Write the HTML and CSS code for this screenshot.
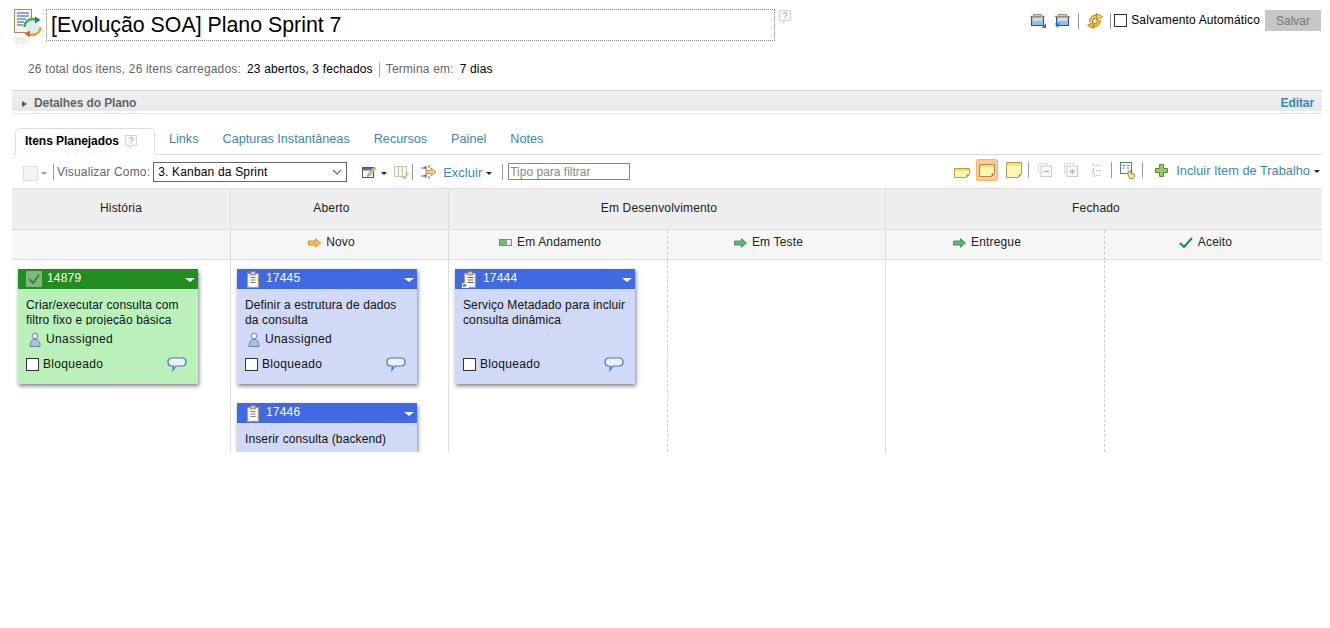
FILE: index.html
```html
<!DOCTYPE html>
<html lang="pt">
<head>
<meta charset="utf-8">
<title>Plano Sprint 7</title>
<link rel="stylesheet" href="styles.css">
</head>
<body>
<svg class="defs" width="0" height="0" aria-hidden="true">
  <defs>
    <symbol id="i-tray" viewBox="0 0 16 15">
      <path d="M3.500 3V1.500h8V3" fill="#e4dccf" stroke="#a98a66"/>
      <rect x="1.500" y="3.500" width="12" height="9" fill="#8fbdf0" stroke="#2f4fa8"/>
      <path d="M0 3.500h15" stroke="#a08a70" stroke-width="1.400"/>
      <rect x="3" y="5" width="9" height="3" fill="#c6e0fa"/>
    </symbol>
    <symbol id="i-clip" viewBox="0 0 14 17">
      <rect x="1.500" y="2.500" width="11" height="14" fill="#f2e8d6" stroke="#b89a70"/>
      <rect x="3" y="4" width="8" height="11" fill="#fff"/>
      <rect x="4.500" y=".5" width="5" height="3.500" fill="#cfc3b0" stroke="#8c7a60" stroke-width=".8"/>
      <path d="M4.500 6.500h5M4.500 9h5M4.500 11.500h5" stroke="#6a7d99"/>
    </symbol>
    <symbol id="i-clip-run" viewBox="0 0 15 17">
      <rect x="2.500" y="2.500" width="11" height="14" fill="#f2e8d6" stroke="#b89a70"/>
      <rect x="4" y="4" width="8" height="11" fill="#fff"/>
      <rect x="5.500" y=".5" width="5" height="3.500" fill="#cfc3b0" stroke="#8c7a60" stroke-width=".8"/>
      <path d="M5.500 6.500h6M5.500 9h6M5.500 11.500h6" stroke="#5a6a7c"/>
      <rect x="0" y="12" width="7" height="5" fill="#fff"/>
      <rect x="1" y="13" width="3" height="3" fill="#3fae55"/>
    </symbol>
    <symbol id="i-chat" viewBox="0 0 20 15">
      <path d="M5 1h10c2.500 0 4 1.500 4 4s-1.500 4-4 4H9l-3 4 .5-4H5C2.500 9 1 7.500 1 5s1.500-4 4-4z" fill="#eef3fc" stroke="#3f74c8" stroke-width="1.200"/>
    </symbol>
    <symbol id="i-user" viewBox="0 0 12 15">
      <circle cx="6" cy="4" r="2.800" fill="#eef2f8" stroke="#6d84a8"/>
      <path d="M1 14.500c0-4.500 1.500-6.500 3.500-7h3c2 .5 3.500 2.500 3.500 7z" fill="#a9c0dc" stroke="#6d84a8"/>
    </symbol>
    <symbol id="i-arrow" viewBox="0 0 13 10">
      <path d="M.5 3h7V.8L12.500 5l-5 4.200V7h-7z" stroke="currentColor" stroke-width=".9" stroke-linejoin="round"/>
    </symbol>
    <symbol id="i-help" viewBox="0 0 14 16">
      <path d="M1.500 1.500h11v10H8L5.500 14v-2.500h-4z" fill="#fafafa" stroke="#d2d2d2"/>
      <path d="M5 4.700c.4-1.500 4-1.500 4 .4 0 1.300-2 1.300-2 2.700M7 9v1" fill="none" stroke="#b9b9b9" stroke-width="1.200"/>
    </symbol>
    <symbol id="i-note" viewBox="0 0 16 16">
      <path d="M.5.500h15v12l-3 3H.500z" fill="#fff8b8" stroke="#b49a5c"/>
      <rect x="1" y="1" width="14" height="2.500" fill="#fbe24b"/>
      <path d="M12.500 15.500v-3h3z" fill="#b08a45"/>
    </symbol>
  </defs>
</svg>

<div class="page">
  <header class="head">
    <svg class="plan-icon" width="28" height="36" viewBox="0 0 28 36" aria-hidden="true">
      <rect x=".5" y=".5" width="17" height="23" fill="#f8f4ec" stroke="#a98a5e"/>
      <path d="M3 4h12M3 7h12M3 10h9M3 13h7M3 16h6" stroke="#5f8fd0" stroke-width="1.300"/>
      <circle cx="18.500" cy="18" r="7" fill="#dcecf8"/>
      <path d="M10.500 18a8 8 0 0 1 13-6.200" fill="none" stroke="#3bae55" stroke-width="2.400"/>
      <path d="M26.500 18a8 8 0 0 1-13 6.200" fill="none" stroke="#ef9a32" stroke-width="2.400"/>
      <path d="M21 7.500l5.500 3.500-5.500 3.500z" fill="#1f9148"/>
      <path d="M16 21.500l-5.500 3.500 5.500 3.500z" fill="#e2652a"/>
      <rect x=".5" y="28" width="12" height="7" fill="#f3eee6"/>
      <path d="M3 30h8" stroke="#dfe8f4"/>
    </svg>
    <h1 class="title">[Evolução SOA] Plano Sprint 7</h1>
    <svg class="help help-title" width="14" height="16" aria-hidden="true"><use href="#i-help"/></svg>
    <div class="head-tools">
      <svg width="16" height="15" viewBox="0 0 16 15" aria-hidden="true"><use href="#i-tray" width="16" height="15"/><path d="M11.500 15L16 15V10.500z" fill="#2f6fc0"/></svg>
      <svg class="tool-b" width="16" height="15" viewBox="0 0 16 15" aria-hidden="true"><use href="#i-tray" width="16" height="15"/><path d="M0 10.500h5L2 15z" fill="#2f6fc0"/></svg>
      <span class="sep sep-a"></span>
      <svg class="sync" width="16" height="16" viewBox="0 0 16 16" aria-hidden="true">
        <path d="M4 9C4 5.500 6.500 3.500 10 3.500" fill="none" stroke="#a8791e" stroke-width="4"/>
        <path d="M4 9C4 5.500 6.500 3.500 10 3.500" fill="none" stroke="#f6cf5a" stroke-width="2.200"/>
        <path d="M9.500.5l6 3.200-6 3.300z" fill="#f6cf5a" stroke="#a8791e" stroke-width=".8" stroke-linejoin="round"/>
        <path d="M12 7c0 3.500-2.500 5.500-6 5.500" fill="none" stroke="#a8791e" stroke-width="4"/>
        <path d="M12 7c0 3.500-2.500 5.500-6 5.500" fill="none" stroke="#f2b53c" stroke-width="2.200"/>
        <path d="M6.500 15.500l-6-3.200 6-3.300z" fill="#f2b53c" stroke="#a8791e" stroke-width=".8" stroke-linejoin="round"/>
      </svg>
      <span class="sep sep-b"></span>
      <label class="auto"><input class="box" type="checkbox">Salvamento Automático</label>
      <button class="save" type="button">Salvar</button>
    </div>
  </header>

  <p class="stats">
    <span class="muted">26 total dos itens, 26 itens carregados:</span>
    <span class="val">23 abertos, 3 fechados</span>
    <span class="stat-sep"></span>
    <span class="muted">Termina em:</span>
    <span class="val">7 dias</span>
  </p>

  <div class="details">
    <span class="tri"></span>
    <span class="details-label">Detalhes do Plano</span>
    <a class="edit">Editar</a>
  </div>

  <nav class="tabs">
    <span class="tab-on">Itens Planejados<svg class="help help-tab" width="14" height="16" aria-hidden="true"><use href="#i-help"/></svg></span>
    <a class="tab">Links</a>
    <a class="tab">Capturas Instantâneas</a>
    <a class="tab">Recursos</a>
    <a class="tab">Painel</a>
    <a class="tab">Notes</a>
  </nav>

  <div class="toolbar">
    <span class="fake-check"></span>
    <span class="caret caret-grey"></span>
    <span class="sep sep-view"></span>
    <span class="view-label">Visualizar Como:</span>
    <div class="select">3. Kanban da Sprint
      <svg class="chev" width="10" height="6" viewBox="0 0 10 6" aria-hidden="true"><path d="M1 1l4 4 4-4" fill="none" stroke="#666" stroke-width="1.200"/></svg>
    </div>
    <svg class="t-edit" width="15" height="14" viewBox="0 0 15 14" aria-hidden="true">
      <rect x=".5" y="2.500" width="11" height="10" fill="#fff" stroke="#6a5a3c"/>
      <rect x="1" y="3" width="10" height="2.500" fill="#3f78c8"/>
      <path d="M6 9l6-7 2 1.500-6 7-2.500 1z" fill="#e8c27a" stroke="#a87f3a" stroke-width=".7"/>
    </svg>
    <span class="caret caret-edit"></span>
    <svg class="t-cols" width="15" height="15" viewBox="0 0 15 15" aria-hidden="true">
      <path d="M.5 1.500h12v10H.5zM4.500 1.500v10M8.500 1.500v10" fill="#f6f4ee" stroke="#c9c3ad"/>
      <path d="M8 11l2.500 2.500L14.500 8" fill="none" stroke="#9fd0ae" stroke-width="1.500"/>
    </svg>
    <span class="sep sep-cols"></span>
    <svg class="t-excl" width="16" height="16" viewBox="0 0 16 16" aria-hidden="true">
      <path d="M0 4h5M0 12h5M5 2v4M5 10v4M8 1v3M8 12v3M3 4l2-1.500M3 12l2-1.500" fill="none" stroke="#55606e"/>
      <path d="M5 6.500h5V4l5 4-5 4V9.500H5z" fill="#f4d676" stroke="#a8862e" stroke-width=".8"/>
    </svg>
    <a class="excl">Excluir</a>
    <span class="caret caret-excl"></span>
    <span class="sep sep-filter"></span>
    <input class="filter" type="text" placeholder="Tipo para filtrar">

    <div class="tb-right">
      <svg class="n-small" width="16" height="11" viewBox="0 0 16 11" aria-hidden="true">
        <path d="M.5 1.500h15v6l-3 3H.500z" fill="#fff8b8" stroke="#b49a5c"/>
        <rect x="1" y="2" width="14" height="2" fill="#fbe24b"/>
        <path d="M12.500 10.500v-3h3z" fill="#b08a45"/>
      </svg>
      <span class="note-on">
        <svg width="16" height="13" viewBox="0 0 16 13" aria-hidden="true">
          <path d="M.5.500h15v9l-3 3H.500z" fill="#fff8b8" stroke="#a58a50"/>
          <rect x="1" y="1" width="14" height="2.500" fill="#fbe24b"/>
          <path d="M12.500 12.500v-3h3z" fill="#a07c3a"/>
        </svg>
      </span>
      <svg class="n-big" width="16" height="16" aria-hidden="true"><use href="#i-note"/></svg>
      <span class="sep sep-n"></span>
      <svg class="t-min" width="14" height="14" viewBox="0 0 14 14" aria-hidden="true">
        <path d="M.5.500h9v2M.500.500v9h2" fill="none" stroke="#d5dde6"/>
        <rect x="3" y="3" width="10.500" height="10.500" fill="#f6f8fa" stroke="#c3cfdb"/>
        <path d="M5.500 8.500h5.500" stroke="#9fb0c2" stroke-width="1.200"/>
      </svg>
      <svg class="t-plus" width="14" height="14" viewBox="0 0 14 14" aria-hidden="true">
        <path d="M.5.500h9v2M.500.500v9h2" fill="none" stroke="#d5dde6"/>
        <rect x="3" y="3" width="10.500" height="10.500" fill="#f6f8fa" stroke="#c3cfdb"/>
        <path d="M5.500 8.500h5.500M8.200 5.700v5.500" stroke="#9fb0c2" stroke-width="1.200"/>
      </svg>
      <svg class="t-list" width="11" height="14" viewBox="0 0 11 14" aria-hidden="true">
        <path d="M1 1h2v3M1 6h2.500L1 9h2.500M1 11h2.500v3H1" fill="none" stroke="#b7c7d8"/>
        <path d="M5 2.500h6M5 7.500h6M5 12.500h6" stroke="#c3cfdb" stroke-dasharray="2 1"/>
      </svg>
      <span class="sep sep-l"></span>
      <svg class="t-hand" width="16" height="17" viewBox="0 0 16 17" aria-hidden="true">
        <rect x=".5" y=".5" width="11" height="11" fill="#fff" stroke="#5478b4"/>
        <path d="M2.500 3.500h3M2.500 6h2M7 3.500h2.500M7 6h2" stroke="#5478b4"/>
        <path d="M8 9.500l2-1 1 3 3 .5 1 2-2 2.500h-3L8 13z" fill="#f6e2ae" stroke="#a8781e" stroke-width=".9"/>
      </svg>
      <span class="sep sep-h"></span>
      <svg class="t-add" width="13" height="13" viewBox="0 0 13 13" aria-hidden="true">
        <path d="M4.500.500h4v4h4v4h-4v4h-4v-4h-4v-4h4z" fill="#9cc85a" stroke="#4f8a46"/>
      </svg>
      <a class="add">Incluir Item de Trabalho</a>
      <span class="caret caret-add"></span>
    </div>
  </div>

  <section class="board">
    <div class="group">História</div>
    <div class="group cell-l">Aberto</div>
    <div class="group group-2 cell-l">Em Desenvolvimento</div>
    <div class="group group-2 cell-l">Fechado</div>

    <div class="state"></div>
    <div class="state cell-l"><svg class="arr arr-o" width="13" height="10" aria-hidden="true"><use href="#i-arrow"/></svg>Novo</div>
    <div class="state cell-l">
      <svg class="arr" width="13" height="7" viewBox="0 0 13 7" aria-hidden="true"><rect x=".5" y=".5" width="12" height="6" fill="#e8eef0" stroke="#7d8a84"/><rect x="1" y="1" width="7" height="5" fill="#7cb27e"/></svg>Em Andamento</div>
    <div class="state cell-d"><svg class="arr arr-g" width="13" height="10" aria-hidden="true"><use href="#i-arrow"/></svg>Em Teste</div>
    <div class="state cell-l"><svg class="arr arr-g" width="13" height="10" aria-hidden="true"><use href="#i-arrow"/></svg>Entregue</div>
    <div class="state cell-d"><svg class="arr" width="14" height="11" viewBox="0 0 14 11" aria-hidden="true"><path d="M1 6l4 4 8-9" fill="none" stroke="#1f8a4c" stroke-width="2"/></svg>Aceito</div>

    <div class="col">
      <article class="card card-green">
        <div class="card-head">
          <span class="done"><svg width="16" height="16" viewBox="0 0 16 16" aria-hidden="true"><path d="M3 8l4 4 6-8" fill="none" stroke="#2d8a2d" stroke-width="2"/></svg></span>
          <span class="card-id">14879</span><span class="card-menu"></span>
        </div>
        <div class="card-title">Criar/executar consulta com filtro fixo e projeção básica</div>
        <div class="card-owner"><svg width="12" height="15" aria-hidden="true"><use href="#i-user"/></svg>Unassigned</div>
        <div class="card-foot"><input class="box" type="checkbox"><span class="blocked">Bloqueado</span><svg class="chat" width="20" height="15" aria-hidden="true"><use href="#i-chat"/></svg></div>
      </article>
    </div>

    <div class="col cell-l">
      <article class="card">
        <div class="card-head">
          <svg class="clip" width="14" height="17" aria-hidden="true"><use href="#i-clip"/></svg>
          <span class="card-id">17445</span><span class="card-menu"></span>
        </div>
        <div class="card-title">Definir a estrutura de dados da consulta</div>
        <div class="card-owner"><svg width="12" height="15" aria-hidden="true"><use href="#i-user"/></svg>Unassigned</div>
        <div class="card-foot"><input class="box" type="checkbox"><span class="blocked">Bloqueado</span><svg class="chat" width="20" height="15" aria-hidden="true"><use href="#i-chat"/></svg></div>
      </article>
      <article class="card">
        <div class="card-head">
          <svg class="clip" width="14" height="17" aria-hidden="true"><use href="#i-clip"/></svg>
          <span class="card-id">17446</span><span class="card-menu"></span>
        </div>
        <div class="card-title">Inserir consulta (backend)</div>
      </article>
    </div>

    <div class="col cell-l">
      <article class="card">
        <div class="card-head card-head-run">
          <svg class="clip" width="15" height="17" aria-hidden="true"><use href="#i-clip-run"/></svg>
          <span class="card-id">17444</span><span class="card-menu"></span>
        </div>
        <div class="card-title">Serviço Metadado para incluir consulta dinâmica</div>
        <div class="card-owner"></div>
        <div class="card-foot"><input class="box" type="checkbox"><span class="blocked">Bloqueado</span><svg class="chat" width="20" height="15" aria-hidden="true"><use href="#i-chat"/></svg></div>
      </article>
    </div>

    <div class="col cell-d"></div>
    <div class="col cell-l"></div>
    <div class="col cell-d"></div>
  </section>
</div>
</body>
</html>
```

FILE: styles.css
```css
* { box-sizing: border-box; }
html, body { margin: 0; background: #fff; }
body { font: 12px/15px "Liberation Sans", Arial, sans-serif; letter-spacing: .17px; color: #000; }
.defs { position: absolute; }
svg { display: block; flex: none; }
a { color: #3a87b8; }
.page { width: 1310px; margin-left: 12px; }

/* header */
.head { display: flex; align-items: flex-start; height: 47px; padding-top: 9px; }
.plan-icon { margin-left: 2px; }
.title { width: 729px; height: 32px; margin: 0 0 0 4px; padding: 0 3px 0 4px; border: 1px dotted #888; font-size: 21.33px; font-weight: 400; line-height: 30px; letter-spacing: 0; }
.help-title { margin: 0 0 0 3px; }
.head-tools { display: flex; align-items: center; margin-left: auto; padding: 1px 1px 0 0; height: 22px; }
.tool-b { margin-left: 9px; }
.sep { display: block; flex: none; width: 1px; height: 16px; background: #999; }
.sep-a { margin-left: 7px; }
.sync { margin-left: 8px; }
.sep-b { margin-left: 7px; }
.auto { display: flex; align-items: center; margin-left: 3px; letter-spacing: .13px; }
.box { appearance: none; display: block; flex: none; width: 13px; height: 13px; margin: 0; border: 1px solid #333; background: #fff; }
.auto .box { margin-right: 4px; }
.save { width: 56px; height: 21px; margin-left: 5px; padding: 0; border: 1px solid #c6c6c6; border-radius: 0; background: #c6c6c6; color: #777; font: 12px "Liberation Sans", Arial, sans-serif; }

/* stats */
.stats { display: flex; align-items: center; height: 16px; margin: 14px 0 0 16px; color: #666; }
.val { margin-left: 6px; color: #000; }
.stat-sep { width: 1px; height: 15px; margin: 0 6px; background: #aaa; }

/* details */
.details { display: flex; align-items: center; height: 24px; margin-top: 13px; padding: 3px 8px 0 10px; border-top: 1px solid #d8d8d8; border-bottom: 1px solid #e4e4e4; background: linear-gradient(#f0f0f0, #e8e8e8 90%, #fff 90%); font-weight: 700; letter-spacing: -.1px; }
.tri { width: 0; height: 0; border-left: 5px solid #555; border-top: 3.500px solid transparent; border-bottom: 3.500px solid transparent; }
.details-label { margin-left: 7px; color: #666; }
.edit { margin-left: auto; }

/* tabs */
.tabs { display: flex; align-items: flex-start; height: 27px; margin-top: 14px; padding-left: 3px; border-bottom: 1px solid #ddd; font-size: 12.65px; letter-spacing: 0; }
.tab-on { display: flex; align-items: center; width: 140px; height: 27px; padding: 0 0 0 9px; border: 1px solid #ddd; border-bottom-color: #fff; border-radius: 5px 5px 0 0; background: #fff; font-size: 12px; font-weight: 700; letter-spacing: -.05px; }
.help-tab { margin-left: 5px; }
.tab { margin-left: 24px; padding-top: 4px; }
.tab-on + .tab { margin-left: 14px; }

/* toolbar */
.toolbar { display: flex; align-items: center; height: 33px; padding-top: 1px; }
.fake-check { width: 15px; height: 15px; margin: 2px 0 0 11px; border: 1px solid #ddd; background: #f4f4f4; }
.caret { flex: none; width: 0; height: 0; border-top: 3px solid #222; border-left: 3px solid transparent; border-right: 3px solid transparent; }
.caret-grey { margin: 3px 0 0 3px; border-top-color: #999; }
.sep-view { margin-left: 6px; }
.view-label { margin-left: 3px; color: #666; }
.select { display: flex; align-items: center; justify-content: space-between; width: 194px; height: 20px; margin: 0 0 0 3px; padding: 0 4px; border: 1px solid #666; background: #fff; }
.t-edit { margin-left: 15px; }
.caret-edit { margin: 2px 0 0 4px; }
.t-cols { margin-left: 7px; }
.sep-cols { margin-left: 3px; }
.t-excl { margin-left: 8px; }
.excl { margin-left: 6px; font-size: 13px; letter-spacing: 0; }
.caret-excl { margin: 2px 0 0 4px; }
.sep-filter { margin-left: 10px; }
.filter { width: 122px; height: 17px; margin: 0 0 1px 5px; padding: 0 1px; border: 1px solid #888; border-radius: 0; background: #fff; font: 12px "Liberation Sans", Arial, sans-serif; }
.filter::placeholder { color: #8a8a8a; opacity: 1; }
.tb-right { display: flex; align-items: center; margin-left: auto; padding: 0 2px 4px 0; }
.n-small { margin-top: 5px; }
.note-on { display: flex; align-items: center; justify-content: center; width: 22px; height: 22px; margin-left: 6px; border: 1px solid #fcb468; border-radius: 2px; background: #fdc997; }
.n-big { margin-left: 8px; }
.sep-n { margin-left: 6px; }
.t-min { margin-left: 9px; }
.t-plus { margin-left: 12px; }
.t-list { margin-left: 13px; }
.sep-l { margin-left: 9px; }
.t-hand { margin-left: 8px; }
.sep-h { margin-left: 6px; }
.t-add { margin-left: 12px; }
.add { margin-left: 8px; font-size: 12.8px; letter-spacing: 0; }
.caret-add { margin: 2px 0 0 4px; }

/* board */
.board { display: grid; grid-template-columns: 218px 218px 219px 218px 219px 218px; grid-template-rows: 41px 30px 192px; height: 264px; overflow: hidden; border-top: 1px solid #ddd; color: #222; }
.group { display: flex; align-items: center; justify-content: center; padding-bottom: 2px; border-bottom: 1px solid #ddd; background: #eee; }
.state { display: flex; align-items: center; justify-content: center; gap: 5px; padding-bottom: 4px; border-bottom: 1px solid #ddd; background: #f6f6f6; }
.group-2 { grid-column: span 2; }
.cell-l { border-left: 1px solid #ddd; }
.cell-d { border-left: 1px dashed #ccc; }
.group.cell-l, .state.cell-l, .state.cell-d { padding-right: 16px; }
.arr-o { color: #c98a2a; fill: #f5bb52; }
.arr-g { color: #3a8a52; fill: #5cb878; }
.col { padding: 9px 0 0 6px; }

/* cards */
.card { width: 180px; height: 115px; margin-bottom: 19px; background: #d0d9f6; box-shadow: 1px 2px 4px rgba(0, 0, 0, .5); color: #111; }
.card-green { background: #baf1ba; }
.card-head { display: flex; align-items: center; height: 20px; padding: 0 2px 0 9px; background: #4169e1; color: #fff; }
.card-head .card-id { margin: 0 0 2px 6px; }
.card-green .card-head { padding-left: 8px; background: #228b22; }
.card-green .card-head .card-id { margin-left: 5px; }
.card-head-run { padding-left: 7px; }
.done { display: block; flex: none; width: 16px; height: 16px; border-radius: 1px; background: #7fb87f; }
.card-menu { width: 0; height: 0; margin: 1px 1px 0 auto; border-top: 4px solid #fff; border-left: 5px solid transparent; border-right: 5px solid transparent; }
.card-title { height: 27px; margin: 9px 8px 0; overflow: hidden; letter-spacing: .12px; }
.card-owner { display: flex; align-items: center; gap: 5px; height: 16px; margin: 6px 8px 0; padding-left: 3px; letter-spacing: .38px; }
.card-foot { display: flex; align-items: center; height: 16px; margin: 9px 8px 0; }
.blocked { margin-left: 4px; letter-spacing: .33px; }
.chat { margin: 1px 3px 0 auto; }
```
